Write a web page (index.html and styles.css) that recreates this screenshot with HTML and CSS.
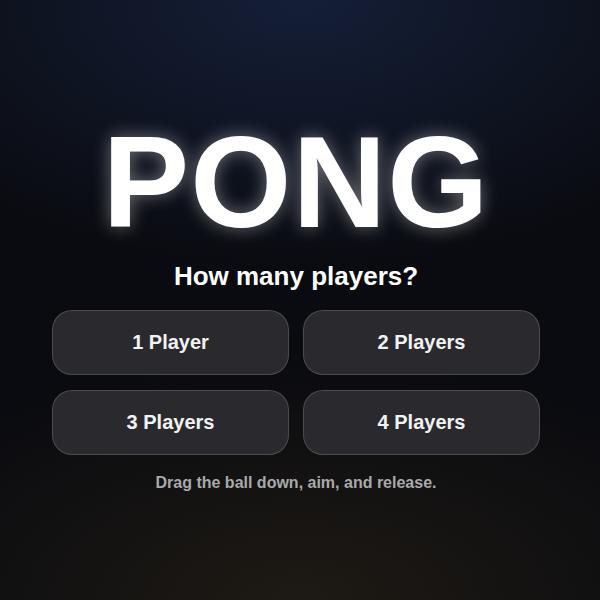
FILE: index.html
```html
<!DOCTYPE html>
<html lang="en">
<head>
  <meta charset="UTF-8">
  <meta name="viewport" content="width=device-width, initial-scale=1.0">
  <title>Pong</title>
  <link rel="stylesheet" href="styles.css">
</head>
<body>
  <div class="menu">
    <h1 class="title">PONG</h1>
    <h2 class="prompt">How many players?</h2>
    <div class="choices">
      <button class="choice">1 Player</button>
      <button class="choice">2 Players</button>
      <button class="choice">3 Players</button>
      <button class="choice">4 Players</button>
    </div>
    <p class="hint">Drag the ball down, aim, and release.</p>
  </div>
</body>
</html>
```

FILE: styles.css
```css
:root {
  --text-color: #ffffff;
  --muted-color: #a9a9ab;
  --button-bg: #2a2a2e;
  --button-border: rgba(255, 255, 255, 0.16);
}

html, body {
  margin: 0;
  padding: 0;
  height: 100%;
}

body {
  background-color: #0a0b10;
  background-image:
    radial-gradient(ellipse 80% 45% at 50% 0%, rgba(22, 34, 62, 0.85), transparent),
    radial-gradient(ellipse 80% 40% at 50% 100%, rgba(32, 27, 20, 0.9), transparent);
  color: var(--text-color);
  font-family: "Liberation Sans", Arial, sans-serif;
  overflow: hidden;
  padding-right: 8px;
  box-sizing: border-box;
}

.menu {
  width: 488px;
  margin: 0 auto;
  padding-top: 112px;
  display: flex;
  flex-direction: column;
  align-items: center;
}

.title {
  margin: 0;
  font-size: 130px;
  line-height: 140px;
  letter-spacing: 1px;
  font-weight: bold;
  text-shadow: 0 0 18px rgba(255, 255, 255, 0.4);
}

.prompt {
  margin: 0;
  margin-top: 9px;
  font-size: 26px;
  line-height: 30px;
  font-weight: bold;
}

.choices {
  width: 100%;
  display: grid;
  grid-template-columns: 1fr 1fr;
  gap: 15px 14px;
  margin-top: 19px;
}

.choice {
  height: 65px;
  background-color: var(--button-bg);
  border: 1px solid var(--button-border);
  border-radius: 20px;
  color: #f2f2f2;
  font-family: inherit;
  font-size: 20px;
  font-weight: bold;
  cursor: pointer;
}

.hint {
  margin: 0;
  margin-top: 19px;
  font-size: 16px;
  font-weight: bold;
  color: var(--muted-color);
}
```
